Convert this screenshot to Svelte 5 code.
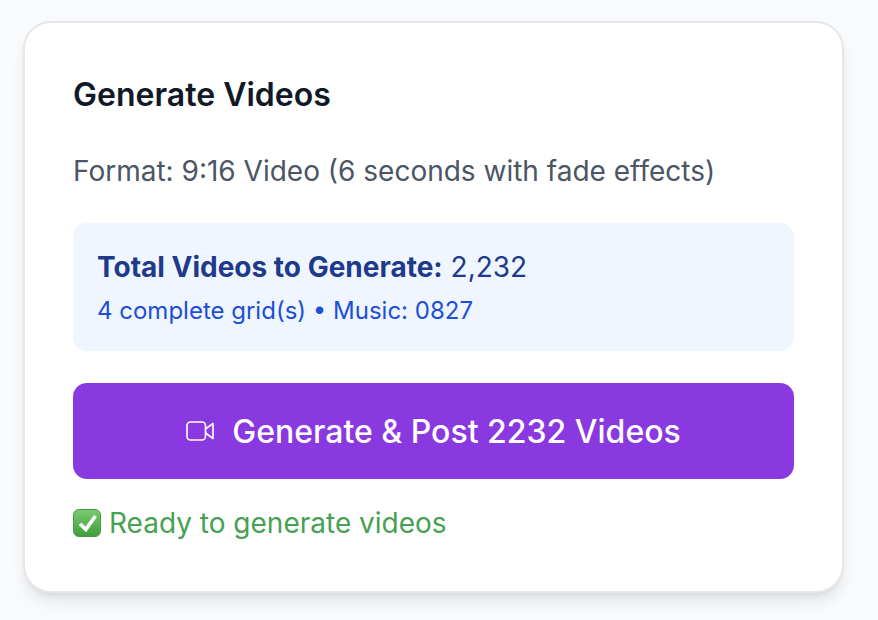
<script>
  let totalVideos = 2232;
  let gridCount = 4;
  let musicId = '0827';
</script>

<div class="page">
  <div class="card">
    <h3 class="title">Generate Videos</h3>
    <p class="format">Format: 9:16 Video (6 seconds with fade effects)</p>

    <div class="summary">
      <div class="total"><strong>Total Videos to Generate:</strong> {totalVideos.toLocaleString('en-US')}</div>
      <div class="detail">{gridCount} complete grid(s) • Music: {musicId}</div>
    </div>

    <button class="generate">
      <svg class="cam" width="28" height="28" viewBox="0 0 28 28" fill="none" stroke="currentColor" stroke-width="1.6" stroke-linejoin="round">
        <rect x="1" y="5" width="18.5" height="18" rx="3.5"></rect>
        <path d="M19.5 12 L27 6.5 V21.5 L19.5 16"></path>
      </svg>
      <span>Generate &amp; Post {totalVideos} Videos</span>
    </button>

    <div class="status">
      <svg class="check" width="28" height="28" viewBox="0 0 28 28">
        <defs>
          <linearGradient id="tick-bg" x1="0" y1="0" x2="0" y2="1">
            <stop offset="0" stop-color="#7ccb6f"></stop>
            <stop offset="1" stop-color="#3f9c3c"></stop>
          </linearGradient>
        </defs>
        <rect x="0.5" y="0.5" width="27" height="27" rx="5.5" fill="url(#tick-bg)" stroke="#4b9a48"></rect>
        <path d="M6 16 L8.5 14 L12.5 18 L21 6.5 L23.5 8 L13 23 Z" fill="#fff" stroke="#fff" stroke-width="0.6" stroke-linejoin="round"></path>
      </svg>
      <span>Ready to generate videos</span>
    </div>
  </div>
</div>

<style>
  :global(body) {
    margin: 0;
    background: #f9fafb;
    font-family: Inter, "Liberation Sans", sans-serif;
  }
  .page {
    height: 620px;
    overflow: hidden;
    padding: 21px 34px 0 23px;
    box-sizing: border-box;
  }
  .card {
    height: 572px;
    box-sizing: border-box;
    padding: 54px 48px 0;
    background: #fff;
    border: 2px solid #e5e7eb;
    border-radius: 28px;
    box-shadow: 0 10px 15px -3px rgba(0,0,0,0.1), 0 4px 6px -4px rgba(0,0,0,0.1);
  }
  .title {
    margin: 0 0 38px;
    font-size: 32px;
    line-height: 36px;
    font-weight: 600;
    color: #111827;
  }
  .format {
    margin: 0 0 32px;
    font-size: 28px;
    line-height: 40px;
    color: #4b5563;
  }
  .summary {
    height: 128px;
    box-sizing: border-box;
    padding: 24px;
    background: #eff6ff;
    border-radius: 14px;
    margin-bottom: 32px;
  }
  .total {
    font-size: 28px;
    line-height: 40px;
    color: #1e3a8a;
  }
  .total strong { font-weight: 700; }
  .detail {
    margin-top: 6px;
    font-size: 24px;
    line-height: 36px;
    color: #1d4ed8;
  }
  .generate {
    width: 100%;
    height: 96px;
    display: flex;
    align-items: center;
    justify-content: center;
    gap: 18px;
    border: none;
    border-radius: 14px;
    background: #8a38e0;
    color: #fff;
    font-family: inherit;
    font-size: 32px;
    font-weight: 540;
  }
  .status {
    margin-top: 24px;
    display: flex;
    align-items: center;
    gap: 8px;
    font-size: 28px;
    line-height: 40px;
    color: #47a152;
  }
</style>
